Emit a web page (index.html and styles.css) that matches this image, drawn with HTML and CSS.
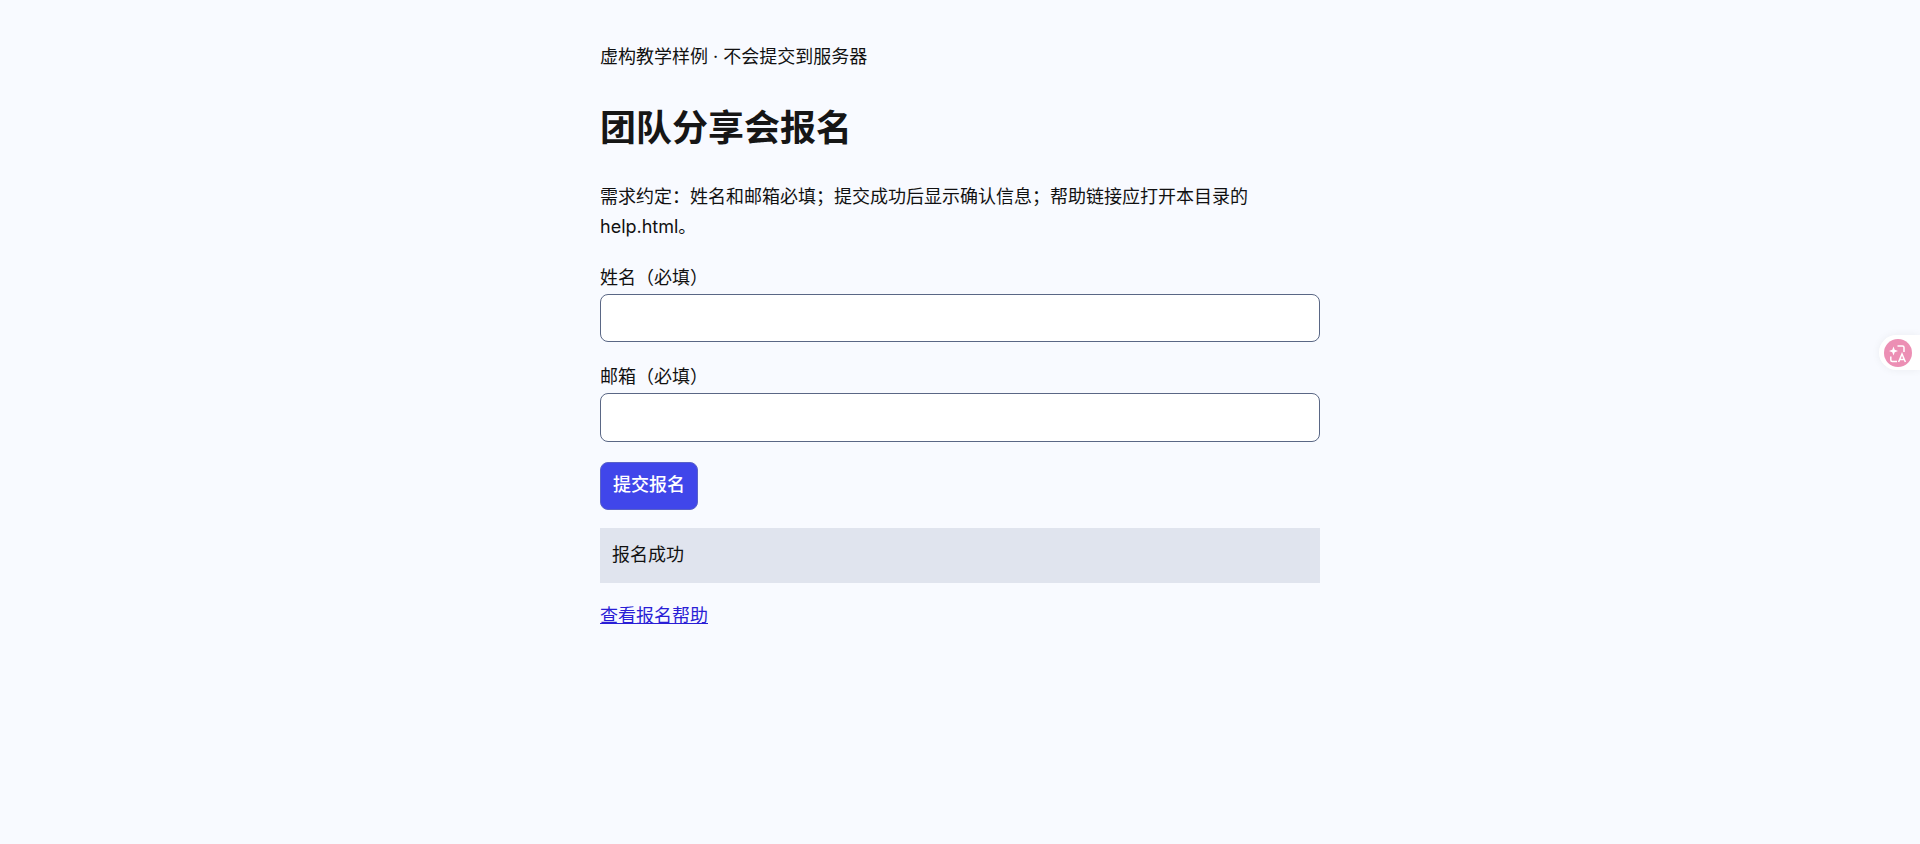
FILE: index.html
```html
<!DOCTYPE html>
<html lang="zh-CN">
<head>
    <meta charset="UTF-8">
    <meta name="viewport" content="width=device-width, initial-scale=1.0">
    <title>团队分享会报名</title>
    <link rel="stylesheet" href="styles.css">
</head>
<body>
    <main class="container">
        <p class="intro">虚构教学样例 · 不会提交到服务器</p>
        <h1>团队分享会报名</h1>
        <p>需求约定：姓名和邮箱必填；提交成功后显示确认信息；帮助链接应打开本目录的 help.html。</p>

        <form class="signup-form">
            <div class="field">
                <label for="name">姓名（必填）</label>
                <input type="text" id="name">
            </div>
            <div class="field">
                <label for="email">邮箱（必填）</label>
                <input type="email" id="email">
            </div>
            <button type="button" class="submit">提交报名</button>
        </form>

        <p class="status">报名成功</p>
        <p><a href="#" class="help-link">查看报名帮助</a></p>
    </main>

    <div class="translate-widget">
        <span class="translate-icon">
            <svg viewBox="0 0 28 28" width="28" height="28" fill="none" stroke="#fff" stroke-width="1.5">
                <path d="M9.500 7.500l1.200 3.300 3.300 1.200-3.300 1.200-1.200 3.300-1.200-3.300-3.300-1.200 3.300-1.200z" fill="#fff" stroke="none"/>
                <path d="M13.500 7h5a1.500 1.500 0 0 1 1.500 1.500V13"/>
                <path d="M6.800 17.500v3.500a1.500 1.500 0 0 0 1.500 1.500H13"/>
                <path d="M14.600 23l3.400-8 3.400 8M15.800 20.500h4.400"/>
            </svg>
        </span>
    </div>
</body>
</html>
```

FILE: styles.css
```css
body {
    margin: 0;
    background-color: #f8faff;
    color: #111;
    font-family: Inter, "Noto Sans CJK SC", sans-serif;
    font-size: 18px;
    line-height: 1.7;
}

.container {
    width: 720px;
    margin: 0 auto;
    padding: 42px 0;
}

p {
    margin: 18px 0;
}

.intro {
    margin-top: 0;
}

h1 {
    font-size: 36px;
    font-weight: 700;
    color: #161616;
    margin: 25px 0 23px;
}

.signup-form {
    margin-top: 20px;
}

.field {
    margin-bottom: 20.2px;
}

label {
    display: block;
}

input {
    display: block;
    width: 100%;
    height: 48.6px;
    box-sizing: border-box;
    background-color: #fff;
    border: 1px solid #5a6785;
    border-radius: 8px;
    font: inherit;
    padding: 8px 12px;
}

.submit {
    display: block;
    height: 48px;
    padding: 0 12px;
    background-color: #4046ea;
    color: #fff;
    border: 1px solid #5a62c8;
    border-radius: 8px;
    font: inherit;
    font-weight: 500;
    cursor: pointer;
}

.status {
    background-color: #e0e4ee;
    padding: 12.300px 12px;
    margin-bottom: 18.500px;
}

.help-link {
    color: #2a1ed6;
}

/* Floating translate button */
.translate-widget {
    position: fixed;
    top: 335px;
    right: 0;
    width: 41px;
    height: 35px;
    background-color: #fff;
    border-radius: 18px 0 0 18px;
    box-shadow: 0 0 8px rgba(0, 0, 0, 0.06);
    display: flex;
    align-items: center;
    padding-left: 5px;
    box-sizing: border-box;
}

.translate-icon {
    display: flex;
    width: 28px;
    height: 28px;
    border-radius: 50%;
    background-color: #ec8fb4;
}
```
